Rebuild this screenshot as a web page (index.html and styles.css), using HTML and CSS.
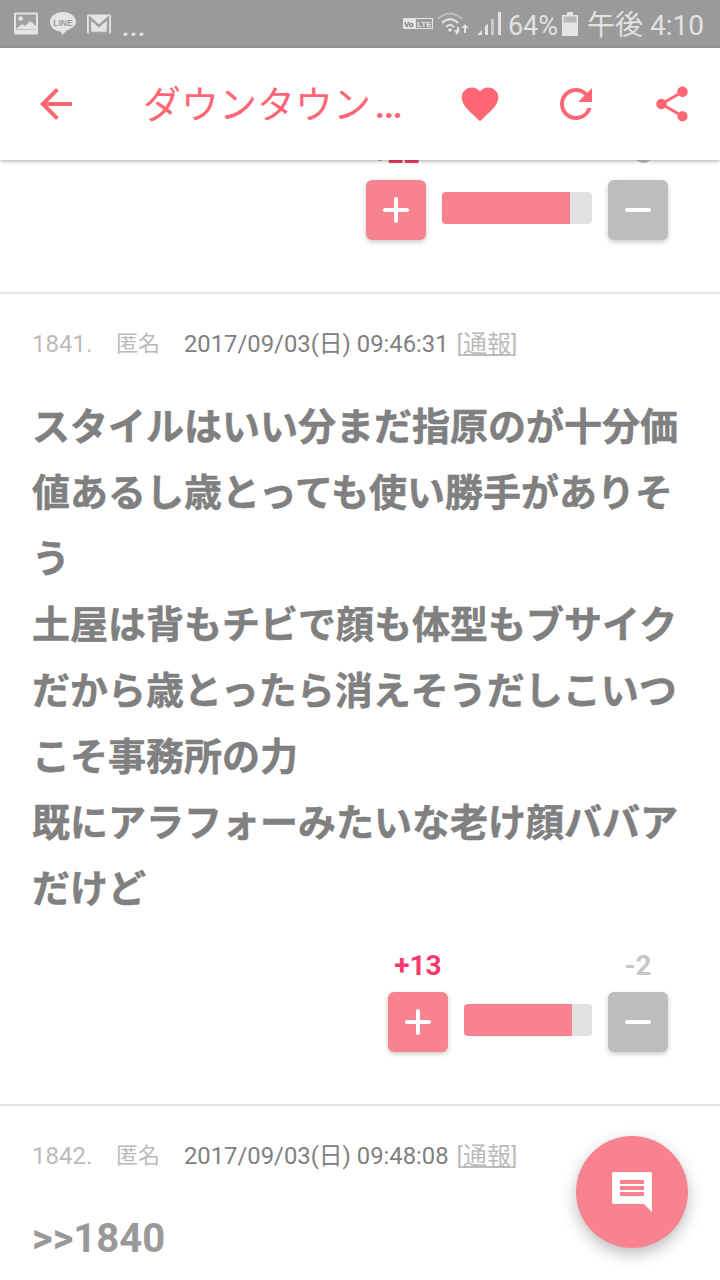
FILE: index.html
```html
<!DOCTYPE html>
<html lang="ja">
<head>
<meta charset="utf-8">
<title>ダウンタウン</title>
<link rel="stylesheet" href="styles.css">
</head>
<body>
<div class="screen">
  <div class="status">
    <div class="status-left">
      <svg class="si" width="26" height="26" viewBox="0 0 26 26"><rect x="1" y="1.5" width="24" height="22" rx="1.5" fill="#e4e4e4"/><rect x="3" y="3.5" width="20" height="15" fill="#a0a0a0"/><circle cx="7.5" cy="7.5" r="2.3" fill="#e4e4e4"/><path d="M3 18l6-5 3 2 5-5 6 5v3z" fill="#e4e4e4"/></svg>
      <svg class="si" width="28" height="26" viewBox="0 0 28 26"><path d="M14 1C6.8 1 1 5.4 1 11c0 5 4.6 9 11 9.800l1 3.200 5-4.500c5-2 9-4.800 9-8.500C27 5.400 21.200 1 14 1z" fill="#e4e4e4"/><text x="14" y="14.500" class="line-t">LINE</text></svg>
      <svg class="si" width="24" height="26" viewBox="0 0 24 26"><rect x="0" y="3.500" width="24" height="19" rx="1.500" fill="#e4e4e4"/><path d="M3 22V7l9 8 9-8v15z" fill="none" stroke="#a0a0a0" stroke-width="2.400"/></svg>
      <span class="more">...</span>
    </div>
    <div class="status-right">
      <svg class="vl" width="30" height="12" viewBox="0 0 30 12"><rect width="30" height="11" fill="#e4e4e4"/><text x="1" y="9" class="vo">Vo</text><rect x="13" y="1" width="16" height="9" fill="#9a9a9a"/><text x="14" y="9" class="lte">LTE</text></svg>
      <svg width="36" height="26" viewBox="0 0 36 26"><path d="M2 8c7-7 17-7 24 0" fill="none" stroke="#bdbdbd" stroke-width="2"/><path d="M6 12c5-5 11-5 16 0" fill="none" stroke="#e4e4e4" stroke-width="2"/><path d="M10 16c3-3 5-3 8 0" fill="none" stroke="#e4e4e4" stroke-width="2"/><circle cx="14" cy="19" r="1.800" fill="#e4e4e4"/><path d="M21 18h6l-3 5zM24 15h2v4h-2z" fill="#e4e4e4" transform="translate(-3 1)"/><path d="M29 13l3.500 4h-7z M28 17h2v5h-2z" fill="#e4e4e4"/></svg>
      <svg width="26" height="26" viewBox="0 0 26 26"><path d="M1 24l5-5v5z M9 24v-9l3-2v11z" fill="#e4e4e4"/><path d="M15 24V8h3v16z" fill="#c8c8c8"/><path d="M22 24V1h3v23z" fill="#e4e4e4"/></svg>
      <span class="pct">64%</span>
      <svg width="16" height="26" viewBox="0 0 16 26"><path d="M5 1h6v3h5v21H0V4h5z" fill="#e4e4e4"/><rect x="1.500" y="5.500" width="13" height="6" fill="#b8b8b8"/></svg>
      <span class="clock">午後 4:10</span>
    </div>
  </div>

  <header class="bar">
    <svg class="back" width="48" height="48" viewBox="0 0 24 24"><path d="M20 11H7.830l5.590-5.590L12 4l-8 8 8 8 1.410-1.410L7.830 13H20z"/></svg>
    <h1 class="title">ダウンタウン<span class="dots">...</span></h1>
    <svg class="heart" width="44" height="44" viewBox="0 0 24 24"><path d="M12 21.350l-1.450-1.320C5.400 15.360 2 12.280 2 8.500 2 5.420 4.420 3 7.500 3c1.740 0 3.410.81 4.500 2.090C13.090 3.810 14.760 3 16.500 3 19.580 3 22 5.420 22 8.500c0 3.780-3.400 6.860-8.550 11.540z"/></svg>
    <svg class="refresh" width="48" height="48" viewBox="0 0 24 24"><path d="M17.650 6.350A7.958 7.958 0 0 0 12 4c-4.420 0-7.990 3.580-7.990 8s3.570 8 7.990 8c3.730 0 6.840-2.550 7.730-6h-2.080A5.990 5.990 0 0 1 12 18c-3.310 0-6-2.690-6-6s2.690-6 6-6c1.660 0 3.140.69 4.220 1.780L13 11h7V4z"/></svg>
    <svg class="share" width="42" height="42" viewBox="0 0 24 24"><path d="M18 16.080c-.76 0-1.440.3-1.960.77L8.910 12.700c.05-.23.090-.46.090-.7s-.04-.47-.09-.7l7.050-4.110c.54.5 1.250.81 2.040.81 1.660 0 3-1.340 3-3s-1.340-3-3-3-3 1.340-3 3c0 .24.040.47.090.7L8.040 9.810C7.500 9.310 6.790 9 6 9c-1.660 0-3 1.340-3 3s1.340 3 3 3c.79 0 1.500-.31 2.040-.81l7.120 4.160c-.05.21-.08.43-.08.65 0 1.610 1.310 2.920 2.920 2.920s2.920-1.310 2.920-2.920-1.310-2.920-2.920-2.920z"/></svg>
  </header>

  <main class="list">
    <article class="comment partial">
      <div class="votes">
        <div class="vote-group">
          <span class="count up">+22</span>
          <div class="btn plus"><svg width="28" height="28" viewBox="0 0 28 28"><path d="M14 3v22M3 14h22"/></svg></div>
        </div>
        <div class="meter" style="width:150px"><div class="fill" style="width:128px"></div></div>
        <div class="vote-group">
          <span class="count down">-3</span>
          <div class="btn minus"><svg width="28" height="28" viewBox="0 0 28 28"><path d="M3 14h22"/></svg></div>
        </div>
      </div>
    </article>

    <article class="comment">
      <div class="meta"><span class="num">1841.</span><span class="name">匿名</span><span class="date">2017/09/03(日) 09:46:31</span><span class="report">[<u>通報</u>]</span></div>
      <p class="body">スタイルはいい分まだ指原のが十分価値あるし歳とっても使い勝手がありそう<br>土屋は背もチビで顔も体型もブサイクだから歳とったら消えそうだしこいつこそ事務所の力<br>既にアラフォーみたいな老け顔ババアだけど</p>
      <div class="votes">
        <div class="vote-group">
          <span class="count up">+13</span>
          <div class="btn plus"><svg width="28" height="28" viewBox="0 0 28 28"><path d="M14 3v22M3 14h22"/></svg></div>
        </div>
        <div class="meter" style="width:128px"><div class="fill" style="width:108px"></div></div>
        <div class="vote-group">
          <span class="count down">-2</span>
          <div class="btn minus"><svg width="28" height="28" viewBox="0 0 28 28"><path d="M3 14h22"/></svg></div>
        </div>
      </div>
    </article>

    <article class="comment">
      <div class="meta"><span class="num">1842.</span><span class="name">匿名</span><span class="date">2017/09/03(日) 09:48:08</span><span class="report">[<u>通報</u>]</span></div>
      <p class="body anchor">&gt;&gt;1840</p>
    </article>
  </main>

  <button class="fab" type="button" aria-label="コメント">
    <svg width="40" height="40" viewBox="0 0 40 40"><path d="M2 0h36a2 2 0 0 1 2 2v38l-8-8H2a2 2 0 0 1-2-2V2a2 2 0 0 1 2-2z" fill="#fff"/><path d="M8 8h24v4H8zM8 14h24v4H8zM8 20h24v4H8z" fill="#f8838f"/></svg>
  </button>
</div>
</body>
</html>
```
FILE: styles.css
```css
* { box-sizing: border-box; }
html, body { margin: 0; padding: 0; background: #fff; }
body { font-family: Roboto, "Noto Sans CJK JP", sans-serif; }
.screen { position: relative; width: 720px; height: 1280px; overflow: hidden; background: #fff; display: flex; flex-direction: column; }

.status { flex: none; height: 48px; background: #9a9a9a; display: flex; justify-content: space-between; align-items: center; padding: 0 16px 0 13px; color: #e2e2e2; }
.status-left { display: flex; align-items: center; gap: 10px; }
.status-right { display: flex; align-items: center; gap: 4px; }
.si { display: block; }
.vl { margin-right: -1px; }
.more { font-size: 24px; font-weight: 700; letter-spacing: 1px; line-height: 26px; margin-top: 8px; margin-left: 1px; }
.line-t { font: 700 8.5px "Liberation Sans", sans-serif; fill: #9a9a9a; text-anchor: middle; }
.vo { font: 700 8px "Liberation Sans", sans-serif; fill: #777; }
.lte { font: 700 8px "Liberation Sans", sans-serif; fill: #e4e4e4; }
.pct { font-size: 27px; margin-left: 2px; line-height: 32px; margin-top: 3px; }
.clock { font-family: Roboto, "Noto Sans CJK JP", sans-serif; font-size: 28px; line-height: 36px; margin-left: 5px; margin-top: 3px; }

.bar { flex: none; position: relative; z-index: 2; height: 112px; background: #fff; box-shadow: 0 1px 4px rgba(0,0,0,.35); display: flex; align-items: center; padding: 0 26px 0 32px; }
.bar svg { flex: none; fill: #ff6674; display: block; }
.title { margin: 0 0 0 63px; width: 258px; font-family: "Noto Sans CJK JP", sans-serif; font-weight: 400; font-size: 38px; line-height: 56px; color: #ff6674; white-space: nowrap; flex: none; }
.dots { font-family: Roboto, sans-serif; font-weight: 700; font-size: 34px; margin-left: 4px; letter-spacing: -1px; }
.heart { margin-left: 57px; }
.refresh { margin-left: 50px; }
.share { margin-left: 51px; }

.list { flex: 1; margin-top: -53px; min-height: 0; }
.comment { padding: 33px 32px 0; border-bottom: 2px solid #e4e4e4; height: 812px; }
.comment.partial { height: 187px; padding-top: 0; }
.comment:last-child { border-bottom: 0; }

.meta { display: flex; align-items: center; height: 34px; font-size: 24px; line-height: 34px; color: #bbb; white-space: nowrap; }
.num { width: 84px; }
.name { width: 68px; font-size: 22px; }
.date { color: #808080; font-size: 23.8px; }
.report { margin-left: 8px; }
.body { margin: 30px 0 0; font-family: "Noto Sans CJK JP", sans-serif; font-weight: 700; font-size: 38px; line-height: 66px; color: #808080; -webkit-text-stroke: .5px #808080; }
.anchor { font-family: Roboto, "Noto Sans CJK JP", sans-serif; font-size: 40px; color: #999; margin-top: 33px; -webkit-text-stroke: 0; }

.votes { display: flex; justify-content: flex-end; align-items: flex-start; gap: 16px; padding: 32px 20px 0 0; }
.vote-group { display: flex; flex-direction: column; align-items: center; }
.count { font-size: 28px; font-weight: 700; line-height: 30px; height: 41px; }
.count.up { color: #f73a6e; }
.count.down { color: #c8c8c8; }
.btn { width: 60px; height: 60px; border-radius: 6px; display: flex; align-items: center; justify-content: center; box-shadow: 0 2px 5px rgba(0,0,0,.22); }
.btn svg { fill: none; stroke: #fff; stroke-width: 4; stroke-linecap: round; }
.plus { background: #f8838f; }
.minus { background: #bdbdbd; }
.meter { margin-top: 53px; height: 32px; border-radius: 4px; background: #e2e2e2; overflow: hidden; }
.fill { height: 100%; background: #f8838f; }

.fab { position: absolute; left: 576px; top: 1136px; width: 112px; height: 112px; padding: 0; border: 0; border-radius: 50%; background: #f8838f; box-shadow: 0 6px 16px rgba(0,0,0,.26); display: flex; align-items: center; justify-content: center; }
```
